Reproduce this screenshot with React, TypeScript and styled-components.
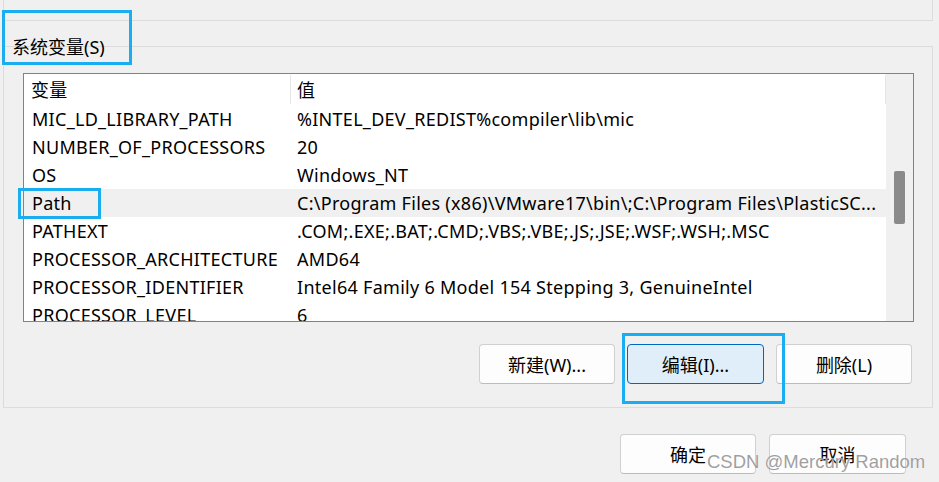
import React from 'react';
import styled, { createGlobalStyle } from 'styled-components';

const GlobalStyle = createGlobalStyle`
  html, body {
    margin: 0;
    padding: 0;
    background: #f0f0f0;
  }
  body {
    font-family: 'Noto Sans', 'Noto Sans CJK SC', sans-serif;
  }
`;

interface EnvVar {
  name: string;
  value: string;
}

const vars: EnvVar[] = [
  { name: 'MIC_LD_LIBRARY_PATH', value: '%INTEL_DEV_REDIST%compiler\\lib\\mic' },
  { name: 'NUMBER_OF_PROCESSORS', value: '20' },
  { name: 'OS', value: 'Windows_NT' },
  { name: 'Path', value: 'C:\\Program Files (x86)\\VMware17\\bin\\;C:\\Program Files\\PlasticSC...' },
  { name: 'PATHEXT', value: '.COM;.EXE;.BAT;.CMD;.VBS;.VBE;.JS;.JSE;.WSF;.WSH;.MSC' },
  { name: 'PROCESSOR_ARCHITECTURE', value: 'AMD64' },
  { name: 'PROCESSOR_IDENTIFIER', value: 'Intel64 Family 6 Model 154 Stepping 3, GenuineIntel' },
  { name: 'PROCESSOR_LEVEL', value: '6' },
];

const App: React.FC = () => {
  return (
    <>
      <GlobalStyle />
      <Dialog>
        <TopGroup />
        <SysGroup>
          <GroupLabel>系统变量(S)</GroupLabel>
          <ListBox>
            <ListMain>
              <HeaderRow>
                <HeadName>变量</HeadName>
                <HeadValue>值</HeadValue>
              </HeaderRow>
              {vars.map((v) => (
                <Row key={v.name} $selected={v.name === 'Path'}>
                  <NameCell>{v.name}</NameCell>
                  <ValueCell>{v.value}</ValueCell>
                </Row>
              ))}
            </ListMain>
            <ScrollTrack>
              <ScrollThumb />
            </ScrollTrack>
          </ListBox>
          <ButtonRow>
            <Button>新建(W)...</Button>
            <Button $primary>编辑(I)...</Button>
            <Button>删除(L)</Button>
          </ButtonRow>
        </SysGroup>
        <FooterRow>
          <Button>确定</Button>
          <Button $wide>取消</Button>
        </FooterRow>

        <Marker $x={2} $y={10} $w={130} $h={55} />
        <Marker $x={18} $y={188} $w={83} $h={31} />
        <Marker $x={622} $y={333} $w={163} $h={71} />
        <Watermark>CSDN @Mercury Random</Watermark>
      </Dialog>
    </>
  );
};

const Dialog = styled.div`
  position: relative;
  width: 939px;
  height: 482px;
  overflow: hidden;
  box-sizing: border-box;
  padding: 0 6px 0 3px;
  background: #f0f0f0;
  color: #000;
  font-size: 18px;
`;

const TopGroup = styled.div`
  box-sizing: border-box;
  height: 21px;
  border: 1px solid #dcdcdc;
  border-top: none;
`;

const SysGroup = styled.div`
  margin-top: 25px;
  border: 1px solid #dcdcdc;
  padding-bottom: 23px;
`;

const GroupLabel = styled.div`
  margin-top: -12px;
  height: 24px;
  line-height: 24px;
  padding-left: 8px;
`;

const ListBox = styled.div`
  display: flex;
  margin: 14px 0 0 19px;
  width: 891px;
  height: 249px;
  box-sizing: border-box;
  border: 1px solid #838383;
  background: #fff;
  overflow: hidden;
`;

const ListMain = styled.div`
  flex: 1;
  display: flex;
  flex-direction: column;
  min-width: 0;
  letter-spacing: 0.28px;
`;

const HeaderRow = styled.div`
  display: flex;
  flex-shrink: 0;
  height: 31px;
  align-items: stretch;
`;

const HeadName = styled.div`
  box-sizing: border-box;
  width: 267px;
  padding: 0 0 0 7px;
  margin: 1px 0;
  line-height: 30px;
  border-right: 1px solid #e5e5e5;
`;

const HeadValue = styled.div`
  flex: 1;
  box-sizing: border-box;
  padding-left: 6px;
  margin: 1px 0;
  line-height: 30px;
  border-right: 1px solid #e5e5e5;
`;

const Row = styled.div<{ $selected?: boolean }>`
  display: flex;
  flex-shrink: 0;
  height: 28px;
  line-height: 28px;
  background: ${(p) => (p.$selected ? '#f0f0f0' : '#fff')};
`;

const NameCell = styled.div`
  box-sizing: border-box;
  width: 267px;
  padding-left: 8px;
  white-space: nowrap;
  overflow: hidden;
`;

const ValueCell = styled.div`
  flex: 1;
  padding-left: 6px;
  white-space: nowrap;
  overflow: hidden;
`;

const ScrollTrack = styled.div`
  width: 27px;
  flex-shrink: 0;
  background: #f0f0f0;
  padding: 97px 0 0 8px;
  box-sizing: border-box;
`;

const ScrollThumb = styled.div`
  width: 11px;
  height: 53px;
  border-radius: 2px;
  background: #8a8a8a;
`;

const ButtonRow = styled.div`
  display: flex;
  justify-content: flex-end;
  gap: 12px;
  margin-top: 22px;
  padding-right: 20px;
`;

const FooterRow = styled.div`
  display: flex;
  justify-content: flex-end;
  gap: 13px;
  margin-top: 26px;
  padding-right: 27px;
`;

const Button = styled.button<{ $primary?: boolean; $wide?: boolean }>`
  width: ${(p) => (p.$primary || p.$wide ? '137px' : '136px')};
  height: 40px;
  box-sizing: border-box;
  border-radius: 4px;
  border: 1px solid ${(p) => (p.$primary ? '#0067c0' : '#d0d0d0')};
  border-bottom-color: ${(p) => (p.$primary ? '#0067c0' : '#bcbcbc')};
  background: ${(p) => (p.$primary ? '#e0eef9' : '#fdfdfd')};
  color: #000;
  font-family: 'Noto Sans', 'Noto Sans CJK SC', sans-serif;
  font-size: 18px;
  padding: 0;
`;

const Marker = styled.div<{ $x: number; $y: number; $w: number; $h: number }>`
  position: absolute;
  left: ${(p) => p.$x}px;
  top: ${(p) => p.$y}px;
  width: ${(p) => p.$w}px;
  height: ${(p) => p.$h}px;
  box-sizing: border-box;
  border: 3px solid #1aaef0;
  pointer-events: none;
`;

const Watermark = styled.div`
  position: absolute;
  left: 707px;
  top: 451px;
  font-family: 'Liberation Sans', Arial, sans-serif;
  font-size: 18.5px;
  line-height: 22px;
  color: rgba(128, 128, 128, 0.75);
  text-shadow: 0 0 1px rgba(255, 255, 255, 0.9);
  white-space: nowrap;
  pointer-events: none;
`;

export default App;
